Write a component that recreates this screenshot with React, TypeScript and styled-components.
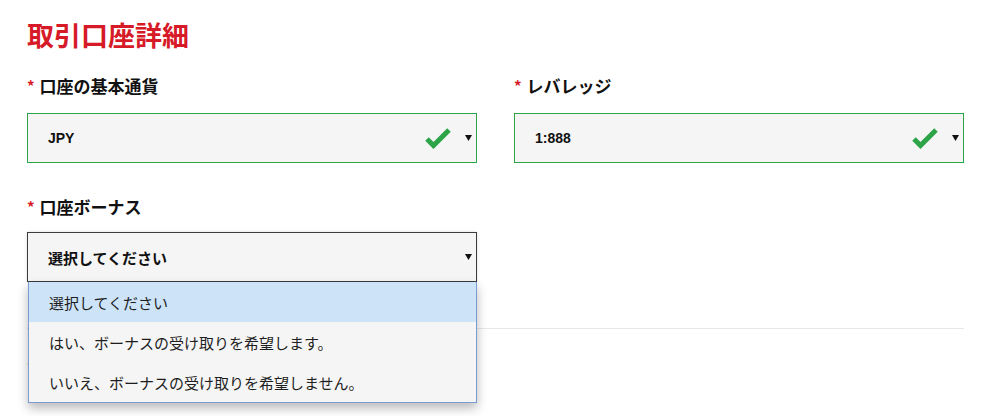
import styled, { createGlobalStyle } from "styled-components";

const GlobalStyle = createGlobalStyle`
    html, body {
        margin: 0;
        padding: 0;
        background: #fff;
    }
    body {
        font-family: "Noto Sans CJK JP", "Liberation Sans", sans-serif;
        color: #111;
    }
`;

const Page = styled.div`
    box-sizing: border-box;
    width: 964px;
    min-height: 416px;
    padding: 17px 0 0 27px;
`;

const Title = styled.h2`
    margin: 0;
    font-size: 27px;
    line-height: 35px;
    font-weight: 700;
    color: #d71a28;
`;

const Grid = styled.div`
    display: grid;
    grid-template-columns: 450px 450px;
    column-gap: 37px;
    margin-top: 22px;
`;

const Field = styled.div<{ $top?: number }>`
    display: flex;
    flex-direction: column;
    margin-top: ${(p) => p.$top ?? 0}px;
    position: relative;
`;

const Label = styled.label`
    display: flex;
    align-items: center;
    gap: 5px;
    font-size: 17px;
    line-height: 24px;
    font-weight: 700;
    color: #111;
`;

const Star = styled.span`
    color: #d71a28;
    font-size: 15px;
`;

const Box = styled.div<{ $state: "valid" | "open" }>`
    margin-top: ${(p) => (p.$state === "open" ? 13 : 15)}px;
    height: 48px;
    display: flex;
    align-items: center;
    padding: 0 4px 0 20px;
    background: #f5f5f5;
    border: 1px solid ${(p) => (p.$state === "valid" ? "#2ca447" : "#3c3c3c")};
    box-shadow: ${(p) => (p.$state === "open" ? "0 0 3px rgba(0,0,0,0.15)" : "none")};
    font-size: ${(p) => (p.$state === "open" ? 15 : 14)}px;
    font-weight: 700;
    color: #111;
`;

const Value = styled.span`
    flex: 1;
    font-family: "Liberation Sans", "Noto Sans CJK JP", sans-serif;
`;

const ValueJa = styled.span`
    flex: 1;
`;

const Check = styled.svg`
    width: 26px;
    height: 22px;
    margin-right: 14px;
`;

const Arrow = styled.svg`
    width: 7px;
    height: 6px;
`;

const Menu = styled.ul`
    position: absolute;
    top: 87px;
    left: 1px;
    width: 447px;
    margin: 0;
    padding: 0;
    list-style: none;
    background: #f5f5f5;
    border: 1px solid #7b9bd4;
    border-top: none;
    box-shadow: 0 5px 10px rgba(0, 0, 0, 0.28);
    z-index: 2;
`;

const Option = styled.li<{ $active?: boolean }>`
    height: 40px;
    display: flex;
    align-items: center;
    padding-left: 20px;
    font-size: 15px;
    color: #1e1e1e;
    background: ${(p) => (p.$active ? "#cce3f8" : "transparent")};
`;

const Divider = styled.hr`
    margin: 46px 0 0;
    border: none;
    border-top: 1px solid #e8e8e8;
`;

const NextField = styled.div`
    margin-top: 27px;
`;

const CheckIcon = () => (
    <Check viewBox="0 0 26 22">
        <polyline points="2,12 8.5,18.5 24,3" fill="none" stroke="#2ca447" strokeWidth="5" />
    </Check>
);

const ArrowIcon = () => (
    <Arrow viewBox="0 0 7 6">
        <polygon points="0,0 7,0 3.5,6" fill="#111" />
    </Arrow>
);

const App = () => {
    return (
        <>
            <GlobalStyle />
            <Page>
                <Title>取引口座詳細</Title>
                <Grid>
                    <Field>
                        <Label>
                            <Star>*</Star>口座の基本通貨
                        </Label>
                        <Box $state="valid">
                            <Value>JPY</Value>
                            <CheckIcon />
                            <ArrowIcon />
                        </Box>
                    </Field>
                    <Field>
                        <Label>
                            <Star>*</Star>レバレッジ
                        </Label>
                        <Box $state="valid">
                            <Value>1:888</Value>
                            <CheckIcon />
                            <ArrowIcon />
                        </Box>
                    </Field>
                    <Field $top={32}>
                        <Label>
                            <Star>*</Star>口座ボーナス
                        </Label>
                        <Box $state="open">
                            <ValueJa>選択してください</ValueJa>
                            <ArrowIcon />
                        </Box>
                        <Menu>
                            <Option $active>選択してください</Option>
                            <Option>はい、ボーナスの受け取りを希望します。</Option>
                            <Option>いいえ、ボーナスの受け取りを希望しません。</Option>
                        </Menu>
                    </Field>
                </Grid>
                <Divider />
                <NextField>
                    <Label>
                        <Star>*</Star>
                    </Label>
                </NextField>
            </Page>
        </>
    );
};

export default App;
